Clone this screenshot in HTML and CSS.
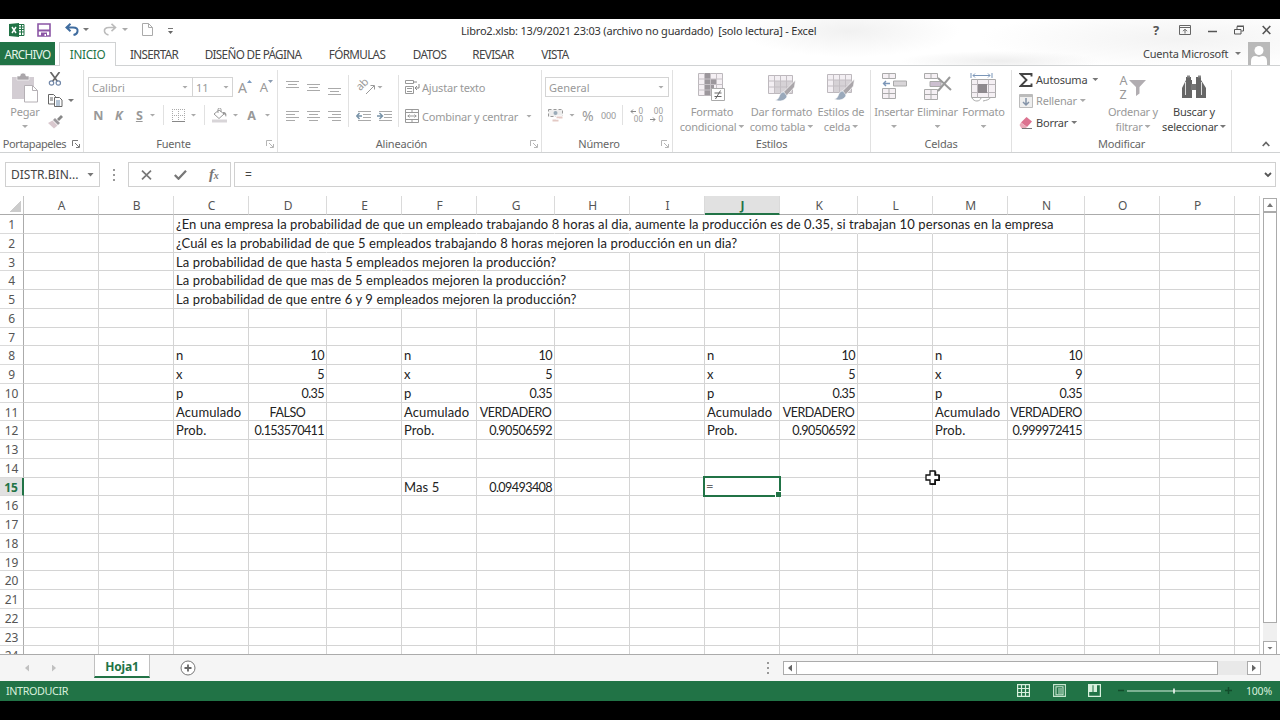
FILE: index.html
```html
<!DOCTYPE html>
<html lang="es">
<head>
<meta charset="utf-8">
<title>Libro2.xlsb - Excel</title>
<link rel="stylesheet" href="styles.css">
</head>
<body>
<svg class="defs" width="0" height="0">
  <symbol id="launch" viewBox="0 0 8 8"><path d="M.5 6V.5H6M3 3l4 4M7.500 4v3.500H4" fill="none" stroke="currentColor"/></symbol>
  <symbol id="brushTable" viewBox="0 0 28 28"><path d="M.5 1.500h24v18H.5z" fill="#f3eff3" stroke="#bdb8bd"/><path d="M7 7h17v12H7z" fill="#d6d2d6"/><path d="M.5 7h24M.5 13h24M6.500 1.500v18M12.500 1.500v18M18.500 1.500v18" stroke="#c3bec3" fill="none"/><path d="M27.500 6l-1 7-8 9-4-3z" fill="#aaa6aa" stroke="#fff" stroke-width=".7"/><path d="M16 18c-3 0-4 2-5 5-1 2-2 3-4 3 4 2 11 1 12-4z" fill="#9aa9bb" stroke="#fff" stroke-width=".6"/></symbol>
</svg>
<div class="app">
  <header class="title">
    <div class="qat">
      <svg class="q-xl" width="16" height="14" viewBox="0 0 16 14"><path d="M9 1.500h6v11H9" fill="#fff" stroke="#217346"/><path d="M10 4h5M10 6.500h5M10 9h5M12.500 2v10" stroke="#217346"/><path d="M0 1l10-1v14L0 13z" fill="#217346"/><path d="M3 4l4 6M7 4l-4 6" stroke="#fff" stroke-width="1.500"/></svg>
      <svg class="q-save" width="14" height="14" viewBox="0 0 14 14"><path d="M1 1h12v12H1z" fill="#fff" stroke="#8b55a5" stroke-width="1.600"/><path d="M1 7.500h12" stroke="#8b55a5" stroke-width="2"/><path d="M4 13v-3.500h6V13" fill="#8b55a5"/><path d="M7.500 11h1.500v2H7.500z" fill="#fff"/></svg>
      <svg class="q-undo" width="14" height="13" viewBox="0 0 14 13"><path d="M1.500 4.500H8c3.500 0 5 1.500 4.500 4-.3 2-2 3-4 3.500M5.500.8L1.500 4.500l4 3.700" fill="none" stroke="#3f6c9f" stroke-width="2"/></svg>
      <i class="arr q-a1"></i>
      <svg class="q-redo" width="14" height="13" viewBox="0 0 14 13"><path d="M12.500 4.500H6c-3.500 0-5 1.500-4.500 4 .3 2 2 3 4 3.500M8.500.8l4 3.700-4 3.700" fill="none" stroke="#bbb" stroke-width="1.600"/></svg>
      <i class="arr dim q-a2"></i>
      <svg class="q-new" width="11" height="13" viewBox="0 0 11 13"><path d="M.5.5h6l4 4v8H.5zM6.500.5v4h4" fill="#fff" stroke="#aaa"/></svg>
      <svg class="q-more" width="5" height="6" viewBox="0 0 5 6"><path d="M0 .5h5" stroke="#777"/><path d="M0 3h5L2.500 6z" fill="#666"/></svg>
    </div>
    <div class="doc">Libro2.xlsb: 13/9/2021 23:03 (archivo no guardado)&nbsp; [solo lectura] - Excel</div>
    <div class="win">
      <b>?</b>
      <svg width="12" height="10" viewBox="0 0 12 10"><path d="M.5.5h11v9H.5zM.5 2.500h11M6 8.500v-4M4 6.200l2-2 2 2" fill="none" stroke="#666"/></svg>
      <svg width="9" height="10" viewBox="0 0 9 10"><path d="M0 6.500h9" stroke="#555" stroke-width="1.500"/></svg>
      <svg width="10" height="10" viewBox="0 0 10 10"><path d="M.5 4.500h6.500v4.500H.5zM3 4V1.500h6.500V6H7.500M3 1h7" fill="none" stroke="#555"/></svg>
      <svg width="9" height="10" viewBox="0 0 9 10"><path d="M.7 1l7.600 8M8.300 1L.7 9" stroke="#555" stroke-width="1.600"/></svg>
    </div>
  </header>
  <nav class="tabs">
    <span class="tab file">ARCHIVO</span><span class="tab active">INICIO</span><span class="tab t3">INSERTAR</span><span class="tab t4">DISEÑO DE PÁGINA</span><span class="tab t5">FÓRMULAS</span><span class="tab t6">DATOS</span><span class="tab t7">REVISAR</span><span class="tab t8">VISTA</span>
    <div class="account"><span>Cuenta Microsoft</span><i class="arr"></i><svg width="22" height="23" viewBox="0 0 22 23"><path d="M0 0h22v23H0z" fill="#b9b9b9"/><circle cx="11" cy="8.500" r="4.500" fill="#fff"/><path d="M3 23v-4c0-5 4-6 8-4 4-2 8-1 8 4v4z" fill="#fff"/></svg></div>
  </nav>

  <section class="ribbon">
    <div class="group g-clip">
      <div class="body">
        <div class="big paste">
          <svg width="28" height="30" viewBox="0 0 28 30"><path d="M1 4h22v22H1z" fill="#d3cdd3"/><path d="M6 3h3a3 3 0 0 1 6 0h3v4H6z" fill="#aaa6aa" stroke="#fff" stroke-width=".6"/><path d="M13.500 12.500h8l5 5v11.500h-13z" fill="#fff" stroke="#b5b0b5"/><path d="M21.500 12.500v5h5" fill="none" stroke="#b5b0b5"/></svg>
          <span>Pegar</span><i class="arr dim"></i>
        </div>
        <div class="clipcol">
          <svg width="14" height="14" viewBox="0 0 14 14"><path d="M2.500 0l7 9.500M11.500 0l-7 9.500" stroke="#666" stroke-width="1.700"/><circle cx="3.500" cy="11" r="2.200" fill="#fff" stroke="#7187a8" stroke-width="1.200"/><circle cx="10.300" cy="11" r="2.200" fill="#fff" stroke="#7187a8" stroke-width="1.200"/></svg>
          <div class="line"><svg width="15" height="13" viewBox="0 0 15 13"><path d="M.5.5h5l2 2V10h-7zM2 4h3M2 6h3" fill="#fff" stroke="#666"/><path d="M6.500 3.500h5l2.500 2.500v6.500H6.500z" fill="#fff" stroke="#666"/><path d="M8 7h4M8 9h4M8 11h4" stroke="#6687a8"/></svg><i class="arr"></i></div>
          <svg width="15" height="14" viewBox="0 0 15 14"><path d="M13 0l2 2-4 4-2-2z" fill="#888"/><path d="M7 3l5 5-2 2-5-5z" fill="#9c989c"/><path d="M4.500 5.500l5 5L6 13.500 0 8z" fill="#d9c8ce"/></svg>
        </div>
      </div>
      <footer><span>Portapapeles</span><svg class="lc dark"><use href="#launch"/></svg></footer>
    </div>

    <div class="group g-font">
      <div class="body rows">
        <div class="row r1">
          <div class="combo w105"><span>Calibri</span><i class="arr dim"></i></div><div class="combo w41"><span>11</span><i class="arr dim"></i></div>
          <span class="grow a1">A<svg width="5" height="3" viewBox="0 0 5 3"><path d="M0 3L2.500 0 5 3z" fill="#7b9cc2"/></svg></span><span class="grow a2">A<svg width="5" height="3" viewBox="0 0 5 3"><path d="M0 0h5L2.500 3z" fill="#8b9cb2"/></svg></span>
        </div>
        <div class="row r2 font2">
          <b class="w20">N</b><b class="w20"><em>K</em></b><b class="w20"><u>S</u></b><i class="arr dim"></i><i class="sep s-f1"></i>
          <svg class="bord" width="13" height="13" viewBox="0 0 13 13"><path d="M.5 0v12M12.500 0v12M6.500 0v12M0 .5h13M0 6.500h13" stroke="#aaa" stroke-dasharray="1 1"/><path d="M0 12.500h13" stroke="#888"/></svg><i class="arr dim b-a"></i><i class="sep s-f2"></i>
          <svg class="bucket" width="16" height="15" viewBox="0 0 16 15"><path d="M2 6l5-4 5 4-5 4.500zM6 5V1.500a1.500 1.500 0 0 1 3 0V4" fill="#fff" stroke="#999"/><path d="M11 4c3 0 4 2 3 5-1-2-1-3-3-3z" fill="#999"/><path d="M0 11.500h15v3H0z" fill="#d8d5d8"/></svg><i class="arr dim u-a"></i><b class="fa">A</b><i class="arr dim"></i>
        </div>
      </div>
      <footer><span>Fuente</span><svg class="lc"><use href="#launch"/></svg></footer>
    </div>

    <div class="group g-align">
      <div class="body cols">
        <div class="lines">
          <div class="row"><svg class="al" viewBox="0 0 13 18"><path d="M0 3.500h13M2 6.500h9M0 9.500h13"/></svg><svg class="al" viewBox="0 0 13 18"><path d="M0 6.500h13M2 9.500h9M0 12.500h13"/></svg><svg class="al" viewBox="0 0 13 18"><path d="M0 10.500h13M2 13.500h9M0 16.500h13"/></svg></div>
          <div class="row"><svg class="al" viewBox="0 0 13 18"><path d="M0 4.500h13M0 7.500h9M0 10.500h13M0 13.500h9"/></svg><svg class="al" viewBox="0 0 13 18"><path d="M0 4.500h13M2 7.500h9M0 10.500h13M2 13.500h9"/></svg><svg class="al" viewBox="0 0 13 18"><path d="M0 4.500h13M4 7.500h9M0 10.500h13M4 13.500h9"/></svg></div>
        </div>
        <i class="sep tall"></i>
        <div class="orient">
          <div class="row"><span class="ab">ab</span><svg class="ln" width="11" height="12" viewBox="0 0 11 12"><path d="M1 11l8-8M5.500 2.500H9.500V6.500" fill="none" stroke="#999"/></svg><i class="arr dim"></i></div>
          <div class="row ind"><svg width="15" height="11" viewBox="0 0 15 11"><path d="M2 .5h13M7 3.500h8M7 6.500h8M2 9.500h13" stroke="#aaa"/><path d="M6 5H1M3.500 2L.8 5l2.700 3" fill="none" stroke="#7893a8" stroke-width="1.400"/></svg><svg width="15" height="11" viewBox="0 0 15 11"><path d="M2 .5h13M7 3.500h8M7 6.500h8M2 9.500h13" stroke="#aaa"/><path d="M0 5h5M2.500 2l3 3-3 3" fill="none" stroke="#7893a8" stroke-width="1.400"/></svg></div>
        </div>
        <i class="sep tall"></i>
        <div class="wrap">
          <div class="row"><svg width="15" height="15" viewBox="0 0 15 15"><path d="M.5.500h8v3h-8zM.5 6.500h8v7h-8zM2 8.500h5M2 11.500h5" fill="none" stroke="#999"/><path d="M8 2h4M14 4v4h-4M12 6l-2 2 2 2" fill="none" stroke="#888"/></svg><span>Ajustar texto</span></div>
          <div class="row"><svg width="15" height="14" viewBox="0 0 15 14"><path d="M.5.5h13v13H.5zM.5 3.500h13M.5 10.500h13M7 .5v3M7 10.500v3M2.500 7h9M4.500 5.500L3 7l1.500 1.500M9.500 5.500L11 7 9.500 8.500" fill="none" stroke="#999"/></svg><span class="lc2">Combinar y centrar</span><i class="arr dim"></i></div>
        </div>
      </div>
      <footer><span>Alineación</span><svg class="lc"><use href="#launch"/></svg></footer>
    </div>

    <div class="group g-num">
      <div class="body rows">
        <div class="row r1"><div class="combo w124"><span>General</span><i class="arr dim"></i></div></div>
        <div class="row r2 num2">
          <svg width="16" height="15" viewBox="0 0 16 15"><path d="M.5 1.500h14v7H.5z" fill="#eee" stroke="#999" stroke-dasharray="3 2"/><circle cx="7.500" cy="5" r="2" fill="#9aabb8"/><path d="M8 8h7v3H8zM4 11h7v3H4z" fill="#e3c9c4" stroke="#fff"/></svg><i class="arr dim"></i><span class="pct">%</span><span class="th">000</span><i class="sep"></i>
          <span class="dec"><span><svg width="6" height="5" viewBox="0 0 6 5"><path d="M6 2.500H1M3 .5l-2 2 2 2" fill="none" stroke="#888"/></svg>0</span><span>00</span></span><span class="dec"><span>00</span><span><svg width="6" height="5" viewBox="0 0 6 5"><path d="M0 2.500h5M3 .5l2 2-2 2" fill="none" stroke="#888"/></svg>0</span></span>
        </div>
      </div>
      <footer><span>Número</span><svg class="lc"><use href="#launch"/></svg></footer>
    </div>

    <div class="group g-style">
      <div class="body">
        <div class="big b-cond"><svg width="28" height="30" viewBox="0 0 28 30"><path d="M.5.5h24v22H.5z" fill="#f5f0f4" stroke="#bcb8bc"/><path d="M7 0h5v22H7zM7 6h11v5H7zM7 12h9v5H7z" fill="#9c979c"/><path d="M.5 6h24M.5 11.500h24M.5 17h24M6.500.5v22M12.500.5v22M18.500.5v22" stroke="#c6c1c6"/><path d="M13.500 15.500h13v12h-13z" fill="#fff" stroke="#aaa"/><path d="M16.500 20h7M16.500 23.500h7M22.500 17.500l-5 8.500" stroke="#666"/></svg><span>Formato</span><span>condicional<i class="arr dim"></i></span></div>
        <div class="big b-tab"><svg width="28" height="30"><use href="#brushTable" width="28" height="28" y="1"/></svg><span>Dar formato</span><span>como tabla<i class="arr dim"></i></span></div>
        <div class="big b-cell"><svg width="28" height="30" viewBox="0 0 28 30"><use href="#brushTable" width="28" height="28"/></svg><span>Estilos de</span><span>celda<i class="arr dim"></i></span></div>
      </div>
      <footer><span>Estilos</span></footer>
    </div>

    <div class="group g-cells">
      <div class="body">
        <div class="big b-ins"><svg width="26" height="30" viewBox="0 0 26 30"><path d="M1.500.5h13v5h-13zM8 .5v5M1.500 15.500h13v10h-13zM8 15.500v10M1.500 20.500h13" fill="#f5f0f4" stroke="#aaa"/><path d="M12.500 8h13v5h-13z" fill="#d8d5d8" stroke="#aaa"/><path d="M9 10.500H2.500M5 8l-2.500 2.500L5 13" fill="none" stroke="#7b96b8" stroke-width="1.400"/></svg><span>Insertar</span><i class="arr dim"></i></div>
        <div class="big b-del"><svg width="28" height="30" viewBox="0 0 28 30"><path d="M.5.5h13v5h-13zM7 .5v5M.5 16.500h13v10h-13zM7 16.500v10M.5 21.500h13" fill="#f5f0f4" stroke="#aaa"/><path d="M6 8.500h11v5H6z" fill="#ccbfd0" stroke="#aaa"/><path d="M14 5l13 12M26 4L14 18" stroke="#999" stroke-width="2"/></svg><span>Eliminar</span><i class="arr dim"></i></div>
        <div class="big b-fmt"><svg width="28" height="30" viewBox="0 0 28 30"><path d="M1.500 6.500h24v18h-24z" fill="#f5f0f4" stroke="#aaa"/><path d="M1.500 11.500h24M1.500 19.500h24M7.500 6.500v18M18.500 6.500v18" stroke="#bbb6bb"/><path d="M8 11h9v9H8z" fill="#8e898e"/><path d="M1 0v5M22 0v5M3 2.500h17M5 .5l-2 2 2 2M18 .5l2 2-2 2" fill="none" stroke="#7b96b8"/><path d="M2 25c2 4 8 4 9 0M13 28c4-1 6-1 8-4" fill="none" stroke="#aaa"/></svg><span>Formato</span><i class="arr dim"></i></div>
      </div>
      <footer><span>Celdas</span></footer>
    </div>

    <div class="group g-mod">
      <div class="body">
        <div class="edit">
          <div class="row on"><svg width="14" height="14" viewBox="0 0 14 14"><path d="M12.500 3.500V1H1.500l6 6-6 6h11v-2.500" fill="none" stroke="#444" stroke-width="1.900"/></svg><span class="l-au">Autosuma</span><i class="arr"></i></div>
          <div class="row"><svg width="14" height="14" viewBox="0 0 14 14"><path d="M.5.5h13v13H.5z" fill="#eee" stroke="#bbb"/><path d="M1 1h12v2H1z" fill="#bbb"/><path d="M7 4v7M4 8l3 3 3-3" fill="none" stroke="#8393a8" stroke-width="1.500"/></svg><span>Rellenar</span><i class="arr dim"></i></div>
          <div class="row on"><svg width="14" height="14" viewBox="0 0 14 14"><path d="M7.500 1L13 5.500 8 11 2 6.500z" fill="#dc7390"/><path d="M2 6.500L8 11l-1.500 1.500h-4L.5 9z" fill="#eaa9b8"/><path d="M3 12.500h10" stroke="#777"/></svg><span>Borrar</span><i class="arr"></i></div>
        </div>
        <div class="big b-sort"><div class="az"><div><span>A</span><span>Z</span></div><svg width="17" height="16" viewBox="0 0 17 16"><path d="M0 0h17l-6.500 7v6.500L7 16V7z" fill="#b1adb1"/></svg></div><span>Ordenar y</span><span>filtrar<i class="arr dim"></i></span></div>
        <div class="big on b-find"><svg width="26" height="30" viewBox="0 0 24 30"><path d="M4 4h5v3h1v18H0V15L4 7zM14 4h5v3l5 8v10H14V7z" fill="#666"/><path d="M9 11h5v6H9z" fill="#777"/><path d="M5 2.500h3v2H5zM16 2.500h3v2h-3z" fill="#888"/><path d="M3.500 9v13M19.500 9v13" stroke="#ddd"/></svg><span>Buscar y</span><span>seleccionar<i class="arr"></i></span></div>
      </div>
      <footer><span>Modificar</span></footer>
    </div>
    <div class="collapse"><svg width="8" height="6" viewBox="0 0 8 6"><path d="M.7 5L4 1.500 7.300 5" fill="none" stroke="#666" stroke-width="1.700"/></svg></div>
  </section>

  <section class="fbar">
    <div class="name"><span>DISTR.BIN...</span><i class="arr"></i></div>
    <div class="dots"><i></i><i></i><i></i></div>
    <div class="fbtns"><svg width="11" height="10" viewBox="0 0 11 10"><path d="M1 .7l9 8.600M10 .7L1 9.300" stroke="#777" stroke-width="1.700"/></svg><svg width="13" height="10" viewBox="0 0 13 10"><path d="M.8 5l3.700 3.700L12 .8" fill="none" stroke="#777" stroke-width="2.300"/></svg><span class="fx"><em>f</em><small>x</small></span></div>
    <div class="finput"><span>=</span><svg width="8" height="6" viewBox="0 0 8 6"><path d="M1 1l3 3 3-3" fill="none" stroke="#555" stroke-width="1.800"/></svg></div>
  </section>

  <main class="sheet">
    <div class="grid" id="grid"></div>
    <div class="vscroll"><div class="sb"><i class="up"></i></div><div class="thumb"></div><div class="sb end"><i class="arr"></i></div></div>
    <svg class="cursor" width="15" height="15" viewBox="0 0 15 15"><path d="M5 1h5v4h4v5h-4v4H5v-4H1V5h4z" fill="#fff" stroke="#111" stroke-width="1.300"/><path d="M10.500 1.500v4M14.200 5v5.200h-4v4H5.500" fill="none" stroke="#111" stroke-width="1.500"/></svg>
  </main>

  <section class="sheetbar">
    <i class="tri l"></i><i class="tri r"></i>
    <span class="stab">Hoja1</span>
    <svg class="plus" width="16" height="16" viewBox="0 0 16 16"><circle cx="8" cy="8" r="7" fill="#fff" stroke="#777"/><path d="M8 4.500v7M4.500 8h7" stroke="#666" stroke-width="1.800"/></svg>
    <div class="dots hd"><i></i><i></i><i></i></div>
    <div class="hscroll"><span><i class="tri l k"></i></span><div class="hthumb"></div><span class="end"><i class="tri r k"></i></span></div>
  </section>
  <footer class="status">
    <span class="mode">INTRODUCIR</span>
    <svg width="13" height="13" viewBox="0 0 13 13"><path d="M.6.600h11.800v11.800H.6zM.5 4.500h12M.5 8.500h12M4.500.5v12M8.500.5v12" fill="none" stroke="#d8f0dd" stroke-width="1.200"/></svg>
    <svg class="v2" width="13" height="13" viewBox="0 0 13 13"><path d="M.6.600h11.800v11.800H.6zM3 2.800h7v8H3zM5 5h4M5 7h4M5 9h4" fill="none" stroke="#c8e6d0" stroke-width="1.100"/></svg>
    <svg class="v3" width="13" height="13" viewBox="0 0 13 13"><path d="M.6.600h11.800v11.800H.6z" fill="none" stroke="#d8f0dd" stroke-width="1.200"/><path d="M1 1h3.500v7H1zM5.500 1H9v7H5.500z" fill="#d8f0dd"/></svg>
    <svg class="zm" width="6" height="7" viewBox="0 0 6 7"><path d="M0 3.500h6" stroke="#124c2b" stroke-width="1.500"/></svg>
    <svg class="slider" width="94" height="6" viewBox="0 0 94 6"><path d="M0 3h94" stroke="#d8f0dd" stroke-width="1.200"/><path d="M47 .5v5" stroke="#fff" stroke-width="1.500"/></svg>
    <svg class="zp" width="7" height="7" viewBox="0 0 7 7"><path d="M0 3.500h7M3.500 0v7" stroke="#124c2b" stroke-width="1.500"/></svg><span class="pc">100%</span>
  </footer>
</div>
<script src="grid.js"></script>
</body>
</html>
```
FILE: grid.js
```js
const columns = 'ABCDEFGHIJKLMNOP'.split('');
const values = {
  C1: '¿En una empresa la probabilidad de que un empleado trabajando 8 horas al dia, aumente la producción es de 0.35, si trabajan 10 personas en la empresa',
  C2: '¿Cuál es la probabilidad de que 5 empleados trabajando 8 horas mejoren la producción en un dia?',
  C3: 'La probabilidad de que hasta 5 empleados mejoren la producción?',
  C4: 'La probabilidad de que mas de 5 empleados mejoren la producción?',
  C5: 'La probabilidad de que entre 6 y 9 empleados mejoren la producción?',
  F15: 'Mas 5', G15: '0.09493408', J15: '='
};
// Text in C1:C5 runs over the empty cells up to this column.
const spill = { 1: 'N', 2: 'J', 3: 'H', 4: 'H', 5: 'H' };

function block(label, value, x, flag, prob) {
  ['n', 'x', 'p', 'Acumulado', 'Prob.'].forEach((t, i) => values[label + (8 + i)] = t);
  ['10', x, '0.35', flag, prob].forEach((t, i) => values[value + (8 + i)] = t);
}
block('C', 'D', '5', 'FALSO', '0.153570411');
block('F', 'G', '5', 'VERDADERO', '0.90506592');
block('J', 'K', '5', 'VERDADERO', '0.90506592');
block('M', 'N', '9', 'VERDADERO', '0.999972415');

const grid = document.getElementById('grid');
function add(text, cls) {
  const d = document.createElement('div');
  d.className = cls;
  if (text) {
    const s = document.createElement('span');
    s.textContent = text;
    d.append(s);
  }
  grid.append(d);
}
add('', 'corner');
columns.forEach(c => add(c, c === 'J' ? 'ch sel' : 'ch'));
add('', 'ch');
for (let r = 1; r <= 24; r++) {
  add(String(r), r === 15 ? 'rh sel' : 'rh');
  columns.concat('Q').forEach(c => {
    const v = values[c + r] || '';
    let cls = 'cell';
    if (/^[\d.]+$/.test(v)) cls += ' num';
    if (/^(FALSO|VERDADERO)$/.test(v)) cls += ' mid';
    if (spill[r] && c >= 'C' && c < spill[r]) cls += ' open';
    if (c + r === 'J15') cls += ' edit-cell';
    add(v, cls);
  });
}
```
FILE: styles.css
```css
* { box-sizing: border-box; }
body { margin: 0; background: #000; font-family: "Noto Sans", "Open Sans", sans-serif; font-size: 11px; letter-spacing: -.2px; color: #444; }
svg { display: block; flex: none; }
.defs { position: absolute; }
.app { width: 1280px; height: 682px; margin-top: 19px; background: #fff; display: flex; flex-direction: column; overflow: hidden;
  background-image: radial-gradient(ellipse 110px 26px at 850px 12px, #f1f1f1, transparent), radial-gradient(ellipse 100px 10px at 1000px 42px, #eee, transparent), radial-gradient(ellipse 200px 30px at 1180px 20px, #f3f3f3, transparent); background-repeat: no-repeat; background-size: 100% 46px; }
.arr { width: 6px; height: 3px; background: #777; clip-path: polygon(0 0, 100% 0, 50% 100%); flex: none; display: inline-block; }
.arr.dim { background: #aaa; }
.title { height: 23px; display: flex; align-items: center; }
.qat { width: 461px; display: flex; align-items: center; padding-left: 9px; height: 23px; padding-bottom: 2px; }
.q-save { margin-left: 12px; }
.q-undo { margin-left: 14px; }
.q-a1 { margin-left: 4px; }
.q-redo { margin-left: 14px; }
.q-a2 { margin-left: 5px; }
.q-new { margin-left: 14px; }
.q-more { margin-left: 15px; margin-top: 2px; }
.doc { width: 691px; white-space: nowrap; color: #333; }
.win { display: flex; align-items: center; height: 23px; padding-bottom: 2px; }
.win b { font-size: 13px; width: 9px; color: #555; margin-left: 1px; }
.win svg { margin-left: 17px; }
.win svg:last-child { margin-left: 18px; }
.tabs { height: 24px; display: flex; border-bottom: 1px solid #d0d2d3; }
.tab { font-size: 11.7px; letter-spacing: -.65px; line-height: 24px; height: 24px; white-space: nowrap; text-align: center; color: #444; }
.file { width: 55px; background: #217346; color: #e6f4ea; height: 23px; }
.active { width: 57px; margin-left: 4px; background: #fff; border: solid #d0d2d3; border-width: 1px 1px 0; color: #217346; line-height: 22px; letter-spacing: -.3px; }
.t3 { width: 76px; }
.t4 { width: 122px; }
.t5 { width: 86px; }
.t6 { width: 59px; }
.t7 { width: 68px; }
.t8 { width: 56px; }
.account { margin-left: auto; display: flex; align-items: center; padding-right: 10px; color: #444; }
.account span { width: 92px; white-space: nowrap; }
.account svg { margin-left: 7px; }

.ribbon { height: 87px; border-bottom: 1px solid #d0d2d3; display: flex; background: #fff; }
.group { height: 82px; margin-top: 4px; border-right: 1px solid #e1e1e1; display: flex; flex-direction: column; color: #999; white-space: nowrap; }
.group footer { height: 17px; display: flex; align-items: center; justify-content: center; color: #666; position: relative; }
.lc { width: 8px; height: 8px; color: #b5b5b5; position: absolute; right: 3px; top: 5px; }
.lc.dark { color: #777; }
.body { height: 66px; display: flex; }
.g-clip { width: 84px; }
.g-clip footer { padding-right: 14px; letter-spacing: -.4px; }
.g-font { width: 194px; }
.g-font footer { padding-right: 14px; }
.g-align { width: 264px; }
.g-align footer { padding-right: 16px; }
.g-num { width: 131px; }
.g-num footer { padding-right: 16px; }
.g-style { width: 198px; }
.g-cells { width: 141px; }
.g-mod { width: 220px; }
.big { display: flex; flex-direction: column; align-items: center; padding-top: 3px; }
.big > span { line-height: 15px; height: 15px; display: flex; align-items: center; }
.big > svg, .az { margin-bottom: 1px; }
.big span .arr { margin-left: 2px; }
.big > .arr { margin-top: 6px; }
.on { color: #444; }
.paste { width: 50px; }
.clipcol { padding-top: 2px; display: flex; flex-direction: column; gap: 8px; margin-left: -2px; }
.clipcol .line { display: flex; align-items: center; gap: 5px; }
.rows { flex-direction: column; }
.row { display: flex; align-items: center; }
.r1 { height: 20px; margin-top: 7px; padding-left: 4px; }
.r2 { height: 18px; margin-top: 9px; }
.combo { height: 20px; border: 1px solid #d4d4d4; padding: 0 4px 0 3px; display: flex; align-items: center; justify-content: space-between; letter-spacing: 0; }
.w105 { width: 105px; }
.w41 { width: 41px; margin-left: -1px; padding-right: 3px; }
.w124 { width: 124px; margin-left: -1px; }
.grow { display: flex; font-size: 13px; }
.grow svg { margin-top: 2px; }
.a1 { margin-left: 5px; font-size: 14px; }
.a2 { margin-left: 8px; }
.font2 { padding-left: 4px; font-size: 12.5px; }
.w20 { width: 20.5px; text-align: center; }
.sep { width: 1px; height: 20px; background: #e1e1e1; flex: none; }
.s-f1 { margin-left: 7px; }
.bord { margin-left: 8px; }
.b-a { margin-left: 6px; }
.s-f2 { margin-left: 7px; }
.bucket { margin-left: 7px; }
.u-a { margin-left: 5px; }
.fa { width: 26px; text-align: center; }
.lines { width: 70px; padding: 7px 0 0 8px; }
.lines .row { height: 20px; gap: 8px; }
.lines .row + .row { margin-top: 9px; }
.al { width: 13px; height: 18px; fill: none; stroke: #aaa; }
.tall { height: 52px; margin-top: 5px; }
.orient { width: 49px; padding: 7px 0 0 7px; }
.orient .row { height: 20px; }
.orient .ind { gap: 6px; margin-top: 9px; }
.ab { font-size: 11px; transform: rotate(-45deg); width: 10px; line-height: 12px; margin-top: -4px; }
.ln { margin-left: -1px; margin-top: 4px; }
.orient .arr { margin-left: 1px; }
.wrap { padding: 7px 0 0 6px; }
.wrap .row { height: 20px; }
.wrap .row + .row { margin-top: 9px; }
.wrap span { margin-left: 2px; }
.wrap .arr { margin-left: 6px; }
.wrap .lc2 { width: 98px; }
.num2 { padding-left: 6px; }
.num2 .arr { margin-left: 5px; }
.pct { font-size: 14px; margin-left: 7px; width: 13px; }
.th { font-size: 9px; margin-left: 6px; width: 21px; }
.dec { font-size: 8px; line-height: 8px; letter-spacing: 0; margin-left: 6px; width: 14px; display: flex; flex-direction: column; }
.dec span { display: flex; justify-content: flex-end; align-items: center; gap: 2px; height: 8px; }
.b-cond { width: 78px; }
.b-tab { width: 61px; }
.b-cell { width: 58px; }
.b-ins { width: 46px; }
.b-del { width: 41px; }
.b-fmt { width: 51px; }
.edit { width: 85px; padding: 0 0 0 7px; }
.edit .row { height: 22px; gap: 3px; }
.edit .row:first-child { height: 19px; }
.edit .row + .row { height: 23px; }
.edit .row + .row + .row { height: 21px; }
.l-au { width: 57px; }
.edit .row:first-child .arr { margin-left: 2px; }
.b-sort { width: 72px; }
.b-find { width: 50px; }
.az { height: 30px; display: flex; font-size: 12.500px; line-height: 14px; gap: 2px; align-items: center; }
.az span { display: block; }
.collapse { flex: 1; display: flex; justify-content: flex-end; align-items: flex-end; padding: 0 10px 5px 0; }

.fbar { height: 43px; padding: 9px 4px 0 5px; display: flex; background: #fff; }
.name { width: 95px; height: 25px; border: 1px solid #d0d0d0; display: flex; align-items: center; justify-content: space-between; padding: 0 5px; font-size: 12px; letter-spacing: 0; }
.name .arr { width: 7px; height: 4px; }
.dots { width: 28px; height: 25px; display: flex; flex-direction: column; align-items: center; justify-content: center; gap: 3px; }
.dots i { width: 1.5px; height: 2px; background: #999; }
.fbtns { width: 103px; height: 25px; border: 1px solid #d0d0d0; display: flex; align-items: center; padding-left: 12px; }
.fbtns svg + svg { margin-left: 22px; }
.fx { font-family: "Liberation Serif", serif; font-size: 15px; font-weight: bold; color: #777; margin-left: 22px; }
.fx small { font-size: 10px; font-style: italic; }
.finput { flex: 1; height: 25px; margin-left: 3px; border: 1px solid #d0d0d0; display: flex; align-items: center; justify-content: space-between; padding: 0 3px 0 10px; font-size: 12px; }

.sheet { height: 459px; display: flex; position: relative; border-bottom: 1px solid #ababab; overflow: hidden; }
.grid { width: 1260px; height: 640px; display: grid; grid-template-columns: 24px 75px 75px 75px 78px 75px 75px 78px 75px 75px 75px 78px 75px 75px 77px 75px 75px 25px; grid-template-rows: 19px repeat(24, 18.75px); align-content: start; border-right: 1px solid #ababab; font-family: Lato, sans-serif; }
.corner { border-right: 1px solid #c4c4c4; border-bottom: 1px solid #ababab; background: linear-gradient(135deg, transparent 50%, #ccc 50%) 10px 4px / 11px 12px no-repeat; }
.ch { border-right: 1px solid #dadada; border-bottom: 1px solid #ababab; font-family: "Noto Sans", sans-serif; text-align: center; line-height: 19px; font-size: 12px; color: #555; padding-left: 1px; }
.rh { border-right: 1px solid #ababab; border-bottom: 1px solid #dadada; font-family: "Noto Sans", sans-serif; text-align: center; line-height: 19px; font-size: 12px; color: #555; }
.ch.sel { border-bottom: 2px solid #217346; color: #217346; font-weight: bold; background: #e1e1e1; }
.rh.sel { border-right: 2px solid #217346; color: #217346; font-weight: bold; background: #e1e1e1; }
.cell { border-right: 1px solid #d4d4d4; border-bottom: 1px solid #d4d4d4; font-size: 13px; letter-spacing: .1px; line-height: 19px; padding: 0 2px; color: #222; white-space: nowrap; min-width: 0; }
.num { text-align: right; font-size: 12.6px; letter-spacing: -.6px; }
.mid { text-align: center; font-size: 12.5px; letter-spacing: -.45px; }
.open { border-right-color: transparent; }
.edit-cell { outline: 2px solid #217346; outline-offset: -1px; position: relative; z-index: 1; margin: -1px 0 0 -1px; color: #666; }
.edit-cell::after { content: ""; position: absolute; right: -2px; bottom: -2px; width: 5px; height: 5px; background: #217346; border: solid #fff; border-width: 1px 0 0 1px; }
.vscroll { margin: 2px 0 0 3px; width: 14px; height: 457px; background: #f0f0f0; display: flex; flex-direction: column; }
.sb { height: 14px; border: 1px solid #ababab; background: #fff; display: flex; align-items: center; justify-content: center; flex: none; }
.up { width: 6px; height: 4px; background: #777; clip-path: polygon(0 100%, 50% 0, 100% 100%); }
.thumb { height: 411px; border: 1px solid #ababab; background: #fff; }
.sb.end { margin-top: auto; }
.cursor { position: absolute; left: 925px; top: 274px; }

.sheetbar { height: 26px; background: #f5f5f5; display: flex; align-items: center; padding-left: 25px; }
.tri { width: 4px; height: 7px; background: #c0c0c0; }
.tri.l { clip-path: polygon(100% 0, 100% 100%, 0 50%); }
.tri.r { clip-path: polygon(0 0, 0 100%, 100% 50%); }
.tri.k { background: #666; }
.tri + .tri { margin-left: 23px; }
.stab { width: 56px; height: 24px; margin: -4px 0 0 38px; background: #fff; border: solid #c0c0c0; border-width: 0 1px; border-bottom: 2px solid #217346; color: #217346; font-weight: bold; text-align: center; line-height: 26px; font-size: 12px; }
.plus { margin-left: 30px; }
.hd { margin-left: 558px; }
.hscroll { width: 478px; margin-left: 1px; height: 14px; background: #e9e9e9; display: flex; }
.hscroll span { width: 14px; border: 1px solid #ababab; background: #fff; display: flex; align-items: center; justify-content: center; }
.hthumb { width: 422px; margin-left: -1px; border: 1px solid #ababab; background: #fff; }
.hscroll .end { margin-left: auto; }
.status { height: 20px; padding-bottom: 1px; background: #217346; color: #d8f0dd; display: flex; align-items: center; font-size: 10.8px; }
.mode { width: 1017px; padding-left: 6px; letter-spacing: -.4px; }
.v2 { margin-left: 23px; }
.v3 { margin-left: 22px; }
.zm { margin-left: 17px; margin-right: 3px; }
.zp { margin-left: 4px; }
.pc { margin-left: 14px; font-size: 10.5px; }
```
